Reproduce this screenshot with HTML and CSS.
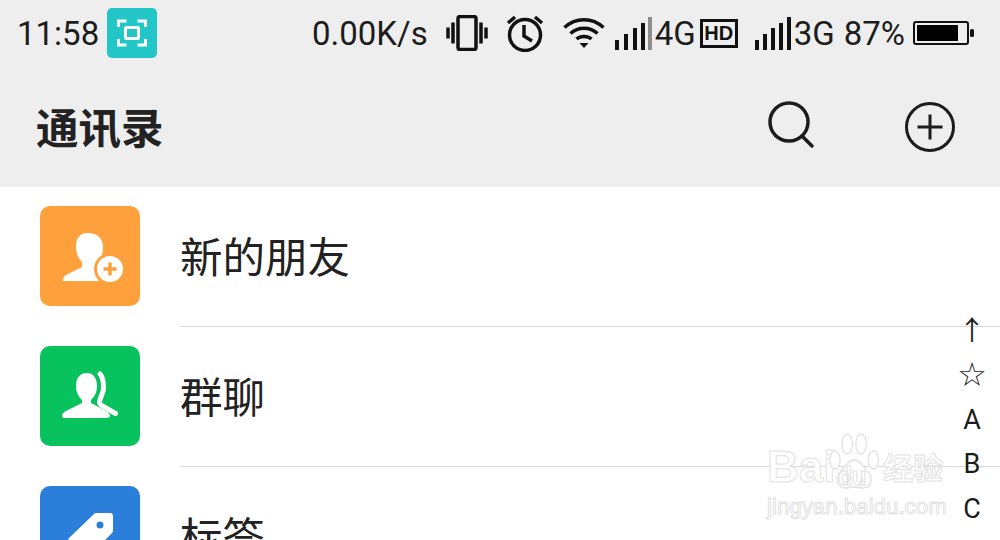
FILE: index.html
```html
<!DOCTYPE html>
<html lang="zh-CN">
<head>
  <meta charset="UTF-8">
  <title>通讯录</title>
  <link rel="stylesheet" href="styles.css">
</head>
<body>
  <div class="phone">
    <div class="status-bar">
      <span class="status-time">11:58</span>
      <span class="scan-badge">
        <svg width="50" height="50" viewBox="0 0 50 50" fill="none" stroke="#fff" stroke-width="3">
          <path d="M11.500 19v-6h8M30.500 13h8v6M38.500 31v6h-8M19.500 37h-8v-6"/>
          <rect x="18.500" y="19.500" width="13" height="11" rx="1"/>
        </svg>
      </span>
      <span class="status-right">
        <span class="status-text speed">0.00K/s</span>
        <svg class="ic-vibrate" width="42" height="36" viewBox="0 0 42 36" fill="none" stroke="#111">
          <rect x="12" y="1.500" width="18" height="33" rx="2" stroke-width="3.500"/>
          <path d="M7 7.500v21M2 12.500v11M35 7.500v21M40 12.500v11" stroke-width="3.500"/>
        </svg>
        <svg class="ic-alarm" width="38" height="38" viewBox="0 0 38 38" fill="none" stroke="#111" stroke-width="3.500">
          <circle cx="19" cy="21" r="15.500"/>
          <path d="M18 11v11l8 5"/>
          <path d="M2 9l7-6M36 9l-7-6"/>
        </svg>
        <svg class="ic-wifi" width="42" height="32" viewBox="0 0 42 32" fill="none" stroke="#111" stroke-width="3.500">
          <path d="M1.500 10.500c11-10.500 28-10.500 39 0"/>
          <path d="M7.500 16.500c7.500-7 19.500-7 27 0"/>
          <path d="M13.500 22c4-3.500 11-3.500 15 0"/>
          <path d="M16.500 26h9l-4.500 5z" fill="#111" stroke="none"/>
        </svg>
        <svg class="ic-signal" width="37" height="33" viewBox="0 0 37 33">
          <path d="M0 23h4v10H0zM9 17h4v16H9zM18 11h4v22h-4zM26 6h4v27h-4z" fill="#111"/>
          <path d="M33 0h4v33h-4z" fill="#8e8e8e"/>
        </svg>
        <span class="status-text net">4G</span>
        <span class="hd-box">HD</span>
        <svg class="ic-signal second" width="36" height="33" viewBox="0 0 36 33">
          <path d="M0 23h4v10H0zM8 17h4v16H8zM16 11h4v22h-4zM24 6h4v27h-4zM32 0h4v33h-4z" fill="#111"/>
        </svg>
        <span class="status-text net net-3g">3G</span>
        <span class="status-text battery-pct">87%</span>
        <svg class="ic-battery" width="62" height="24" viewBox="0 0 62 24">
          <rect x="1" y="1" width="54" height="22" rx="2" fill="none" stroke="#111" stroke-width="2"/>
          <rect x="4" y="4" width="41" height="16" fill="#000"/>
          <rect x="57" y="8" width="4" height="8" rx="1.500" fill="#111"/>
        </svg>
      </span>
    </div>

    <header class="title-bar">
      <h1 class="page-title">通讯录</h1>
      <span class="title-actions">
        <svg class="search-icon" width="48" height="48" viewBox="0 0 48 48" fill="none" stroke="#1c1c1c" stroke-width="3.500">
          <circle cx="22" cy="21" r="19"/>
          <path d="M35 35l10 10" stroke-linecap="round"/>
        </svg>
        <svg class="add-icon" width="50" height="50" viewBox="0 0 50 50" fill="none" stroke="#1c1c1c">
          <circle cx="25" cy="25" r="23.500" stroke-width="3"/>
          <path d="M12.500 25h25M25 12.500v25" stroke-width="3"/>
        </svg>
      </span>
    </header>

    <ul class="contact-list">
      <li class="contact-row">
        <span class="row-icon orange">
          <svg width="100" height="100" viewBox="0 0 100 100">
            <path d="M48 27c-9 0-12 6-12 14 0 7 3 12 6 15v5L26 69c-2 1-3 3-3 5v1h47V56l-12 2v-2c3-3 5-8 5-15 0-9-6-14-15-14z" fill="#fff"/>
            <circle cx="70" cy="63" r="16" fill="#fea03c"/>
            <circle cx="70" cy="63" r="13" fill="#fff"/>
            <path d="M70 56.500v13M63.500 63h13" stroke="#fea03c" stroke-width="3.500" fill="none"/>
          </svg>
        </span>
        <span class="row-label">新的朋友</span>
      </li>
      <li class="contact-row">
        <span class="row-icon green">
          <svg width="100" height="100" viewBox="0 0 100 100">
            <path d="M47 27c-8 0-11 6-11 13 0 7 3 11 6 14v3L26 65c-3 2-4 3-4 5 0 1.500 1 2 3 2h41c2 0 4-1 4-2 0-2-2-4-4-5l-15-8v-3c3-3 6-7 6-14 0-7-3-13-10-13z" fill="#fff"/>
            <path d="M60 28c3 3 3.500 9 3.500 14 0 6-4 10-4 14 0 2 1 3 3 4l13 7.500" fill="none" stroke="#fff" stroke-width="5" stroke-linecap="round"/>
          </svg>
        </span>
        <span class="row-label">群聊</span>
      </li>
      <li class="contact-row">
        <span class="row-icon blue">
          <svg width="100" height="100" viewBox="0 0 100 100">
            <path d="M56 27h14c2 0 3 1 3 3v14c0 1 0 2-1 3L47 72 28 53l26-25c1-1 1-1 2-1z" fill="#fff"/>
            <circle cx="60" cy="39" r="3.500" fill="#2b7fdb"/>
          </svg>
        </span>
        <span class="row-label">标签</span>
      </li>
    </ul>

    <nav class="alpha-index">
      <span class="alpha-item">↑</span>
      <span class="alpha-item star">☆</span>
      <span class="alpha-item">A</span>
      <span class="alpha-item">B</span>
      <span class="alpha-item">C</span>
    </nav>

    <div class="watermark">
      <div class="wm-logo">
        <span class="wm-latin">Bai</span>
        <svg width="54" height="58" viewBox="0 0 62 58" preserveAspectRatio="none" fill="#fff" stroke="#e2e2e2" stroke-width="1.500">
          <ellipse cx="8" cy="28" rx="6" ry="9"/>
          <ellipse cx="22" cy="12" rx="6" ry="10"/>
          <ellipse cx="38" cy="12" rx="6" ry="10"/>
          <ellipse cx="52" cy="28" rx="6" ry="9"/>
          <path d="M30 28c-8 0-10 8-16 12-6 5-4 16 6 16 4 0 6-1 10-1s6 1 10 1c10 0 12-11 6-16-6-4-8-12-16-12z"/>
        </svg>
        <span class="wm-du">du</span>
        <span class="wm-cn">经验</span>
      </div>
      <div class="wm-url">jingyan.baidu.com</div>
    </div>
  </div>
</body>
</html>
```

FILE: styles.css
```css
html, body {
  margin: 0;
  padding: 0;
}

body {
  background: #fff;
  color: #1c1c1c;
  font-family: Roboto, "Noto Sans CJK SC", sans-serif;
}

.phone {
  width: 1000px;
  height: 540px;
  position: relative;
  overflow: hidden;
}

/* Status bar */
.status-bar {
  height: 67px;
  background: #eeeeee;
  display: flex;
  align-items: center;
  box-sizing: border-box;
  padding-left: 17px;
}

.status-time {
  font-size: 33px;
  width: 90px;
}

.scan-badge {
  width: 50px;
  height: 50px;
  margin-top: -1px;
  background: #22c6c6;
  border-radius: 5px;
  display: block;
}

.scan-badge svg {
  display: block;
}

.status-right {
  display: flex;
  align-items: center;
  margin-left: 155px;
}

.status-text {
  font-size: 33px;
  line-height: 40px;
}

.status-right svg {
  flex: none;
}

.ic-vibrate { margin-left: 18px; margin-top: -1px; }
.ic-alarm { margin-left: 18px; margin-top: -2px; }
.ic-wifi { margin-left: 19px; margin-top: -1px; }
.ic-signal { margin-left: 10px; }
.ic-signal.second { margin-left: 17px; }
.net { margin-left: 3px; }
.net-3g { margin-left: 3px; }
.battery-pct { margin-left: 9px; }
.ic-battery { margin-left: 8px; margin-top: -1px; }

.hd-box {
  box-sizing: border-box;
  width: 38px;
  height: 29px;
  margin-left: 4px;
  border: 3px solid #111;
  font-family: "Liberation Sans", sans-serif;
  font-size: 20px;
  font-weight: 700;
  line-height: 23px;
  text-align: center;
  color: #111;
}

/* Title bar */
.title-bar {
  height: 120px;
  background: #eeeeee;
  display: flex;
  align-items: center;
  justify-content: space-between;
  padding: 0 45px 0 36px;
}

.page-title {
  margin: 0 0 4px;
  font-size: 42.500px;
  font-weight: 700;
  color: #222;
}

.title-actions {
  display: flex;
  align-items: center;
}

.search-icon {
  margin-top: -4px;
}

.add-icon {
  margin-left: 90px;
}

/* Contact rows */
.contact-list {
  list-style: none;
  margin: 0;
  padding: 0;
}

.contact-row {
  height: 140px;
  display: flex;
  align-items: center;
  padding-left: 40px;
}

.row-icon {
  width: 100px;
  height: 100px;
  flex: none;
  margin-top: -2px;
  border-radius: 10px;
  overflow: hidden;
}

.row-icon svg {
  display: block;
}

.orange { background: #fea03c; }
.green { background: #08c25e; }
.blue { background: #2b7fdb; }

.row-label {
  align-self: stretch;
  flex: 1;
  display: flex;
  align-items: center;
  margin-left: 40px;
  padding-bottom: 4px;
  font-size: 42.500px;
  color: #222;
  border-bottom: 1px solid #dcdcdc;
}

/* Overlays */
.alpha-index {
  position: absolute;
  top: 308.500px;
  right: 8px;
  width: 40px;
  display: flex;
  flex-direction: column;
  align-items: center;
}

.alpha-item {
  height: 44.500px;
  line-height: 44.500px;
  font-size: 27px;
}

.star {
  font-family: "DejaVu Sans", sans-serif;
  font-size: 33px;
}

.watermark {
  position: absolute;
  left: 767px;
  top: 432px;
  width: 184px;
  color: #fff;
  -webkit-text-stroke: 1px #e2e2e2;
}

.wm-logo {
  display: flex;
  align-items: flex-end;
  height: 58px;
  position: relative;
}

.wm-latin {
  font-family: "Liberation Sans", sans-serif;
  font-size: 44px;
  font-weight: 700;
  line-height: 46px;
  width: 61px;
}

.wm-du {
  position: absolute;
  left: 71px;
  bottom: -1px;
  font-size: 25px;
  font-weight: 700;
  line-height: 28px;
}

.wm-cn {
  margin-left: 1px;
  font-size: 30px;
  font-weight: 700;
  line-height: 42px;
}

.wm-url {
  font-family: "Liberation Sans", sans-serif;
  font-size: 22.300px;
  line-height: 30px;
  margin-top: 2px;
}
```
